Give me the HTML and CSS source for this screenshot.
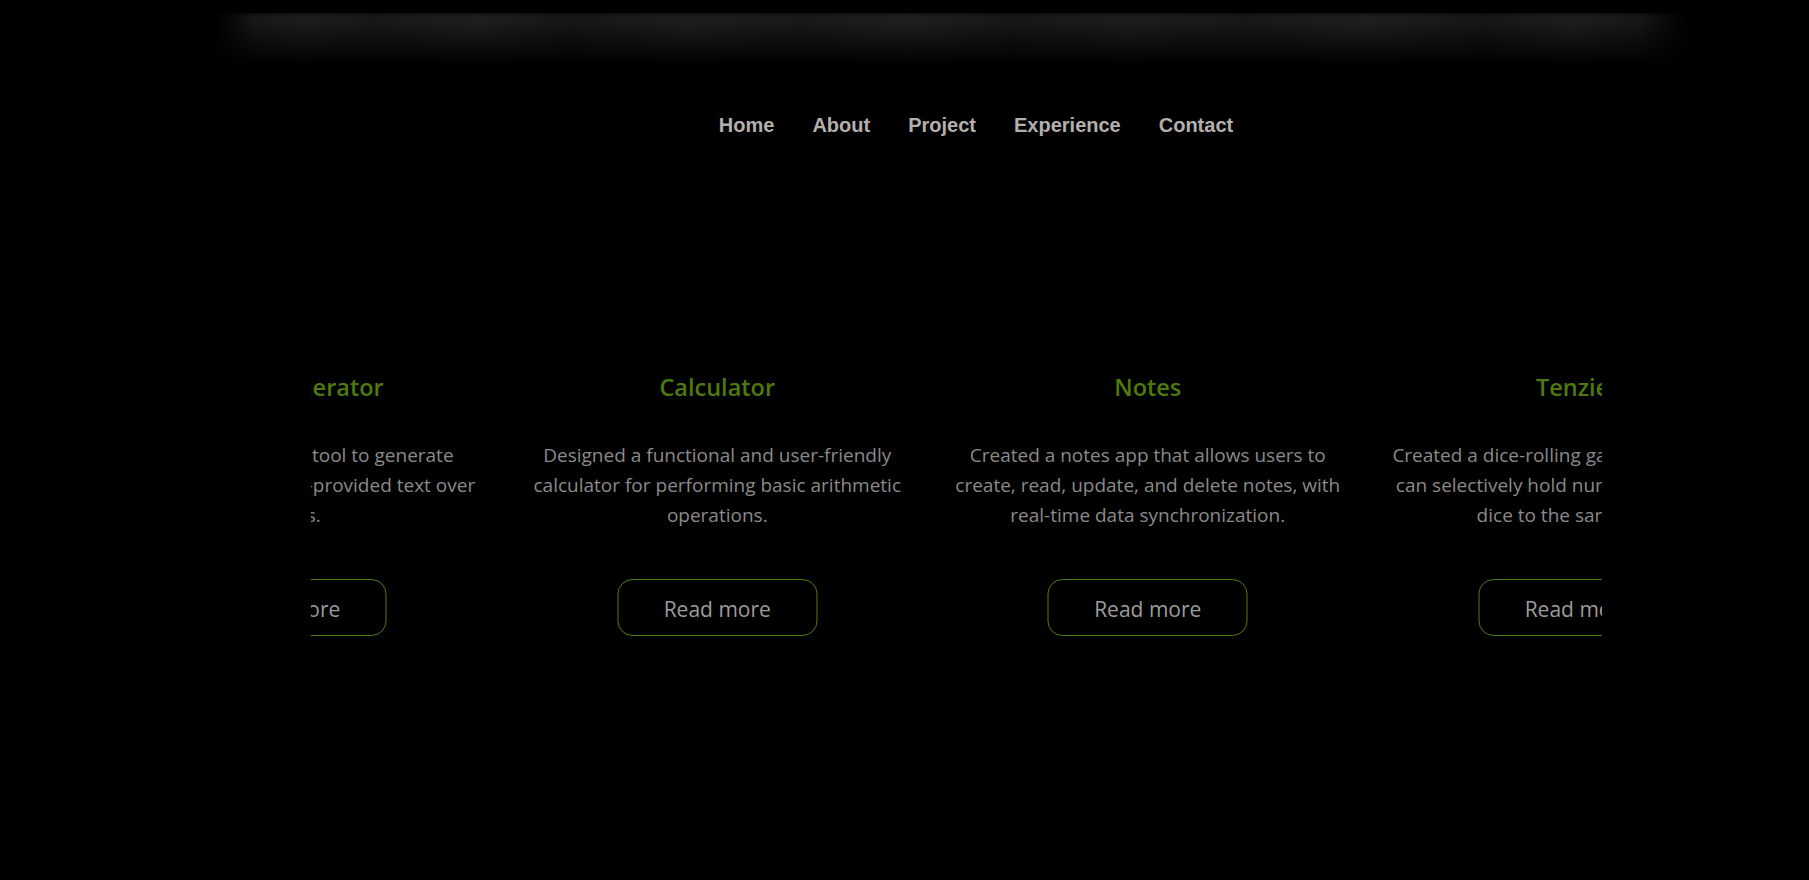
FILE: index.html
```html
<!DOCTYPE html>
<html lang="en">
<head>
<meta charset="utf-8">
<title>Projects</title>
<link rel="stylesheet" href="styles.css">
</head>
<body>
<header class="top">
  <div class="glass"></div>
  <nav class="nav">
    <a class="nav-link" href="#">Home</a>
    <a class="nav-link" href="#">About</a>
    <a class="nav-link" href="#">Project</a>
    <a class="nav-link" href="#">Experience</a>
    <a class="nav-link" href="#">Contact</a>
  </nav>
</header>
<main class="projects">
  <div class="viewport">
    <div class="track">
      <article class="card">
        <h3 class="card-title">Meme Generator</h3>
        <p class="card-text">Created a web-based tool to generate funny memes with user-provided text over images.</p>
        <button class="card-btn">Read more</button>
      </article>
      <article class="card">
        <h3 class="card-title">Calculator</h3>
        <p class="card-text">Designed a functional and user-friendly calculator for performing basic arithmetic operations.</p>
        <button class="card-btn">Read more</button>
      </article>
      <article class="card">
        <h3 class="card-title">Notes</h3>
        <p class="card-text">Created a notes app that allows users to create, read, update, and delete notes, with real-time data synchronization.</p>
        <button class="card-btn">Read more</button>
      </article>
      <article class="card">
        <h3 class="card-title">Tenzies</h3>
        <p class="card-text">Created a dice-rolling game where players can selectively hold numbers to match all dice to the same value.</p>
        <button class="card-btn">Read more</button>
      </article>
    </div>
  </div>
</main>
</body>
</html>
```
FILE: styles.css
```css
* { box-sizing: border-box; }

html, body {
  margin: 0;
  padding: 0;
  background: #000;
  height: 100%;
  overflow: hidden;
}

body {
  font-family: "Open Sans", "Noto Sans", sans-serif;
}

.top {
  display: flex;
  flex-direction: column;
}

.glass {
  margin-top: 13px;
  margin-left: 213px;
  width: 1477px;
  height: 52px;
  background:
    linear-gradient(to bottom, rgba(0,0,0,0) 0%, rgba(0,0,0,0.55) 55%, #000 100%),
    linear-gradient(to right, #141414 0%, #222 6%, #1c1c1c 11%, #242424 18%, #1a1a1a 24%, #232323 32%, #1d1d1d 40%, #252525 47%, #1b1b1b 54%, #222 62%, #1c1c1c 70%, #242424 78%, #1a1a1a 86%, #232323 92%, #141414 100%);
  -webkit-mask-image: linear-gradient(to right, transparent 0, #000 40px, #000 calc(100% - 50px), transparent 100%);
  mask-image: linear-gradient(to right, transparent 0, #000 40px, #000 calc(100% - 50px), transparent 100%);
  filter: blur(3px);
}

.nav {
  margin-top: 48px;
  padding-left: 143px;
  display: flex;
  justify-content: center;
  gap: 38px;
  height: 24px;
  align-items: center;
}

.nav-link {
  font-family: "Liberation Sans", Arial, sans-serif;
  font-weight: 700;
  font-size: 20px;
  line-height: 24px;
  color: #b4afaf;
  text-decoration: none;
}

.projects {
  padding-top: 234px;
}

.viewport {
  margin-left: 311px;
  width: 1291px;
  overflow: hidden;
}

.track {
  display: flex;
  transform: translateX(-239.5px);
}

.card {
  flex: 0 0 430.5px;
  display: flex;
  flex-direction: column;
  align-items: center;
  padding: 0 22px;
  text-align: center;
}

.card-title {
  margin: 0;
  font-size: 23.5px;
  line-height: 32px;
  font-weight: 600;
  color: #4d7a0a;
  white-space: nowrap;
}

.card-text {
  margin: 37px 0 0;
  font-size: 19px;
  line-height: 30px;
  color: #8a8a8a;
  height: 90px;
}

.card-btn {
  margin-top: 49px;
  width: 200px;
  height: 57px;
  border: 1px solid #4f7d0c;
  border-radius: 15px;
  background: transparent;
  color: #9c9c9c;
  font-family: "Open Sans", "Noto Sans", sans-serif;
  font-size: 21px;
  padding: 2px 0 0;
  cursor: pointer;
}
```
